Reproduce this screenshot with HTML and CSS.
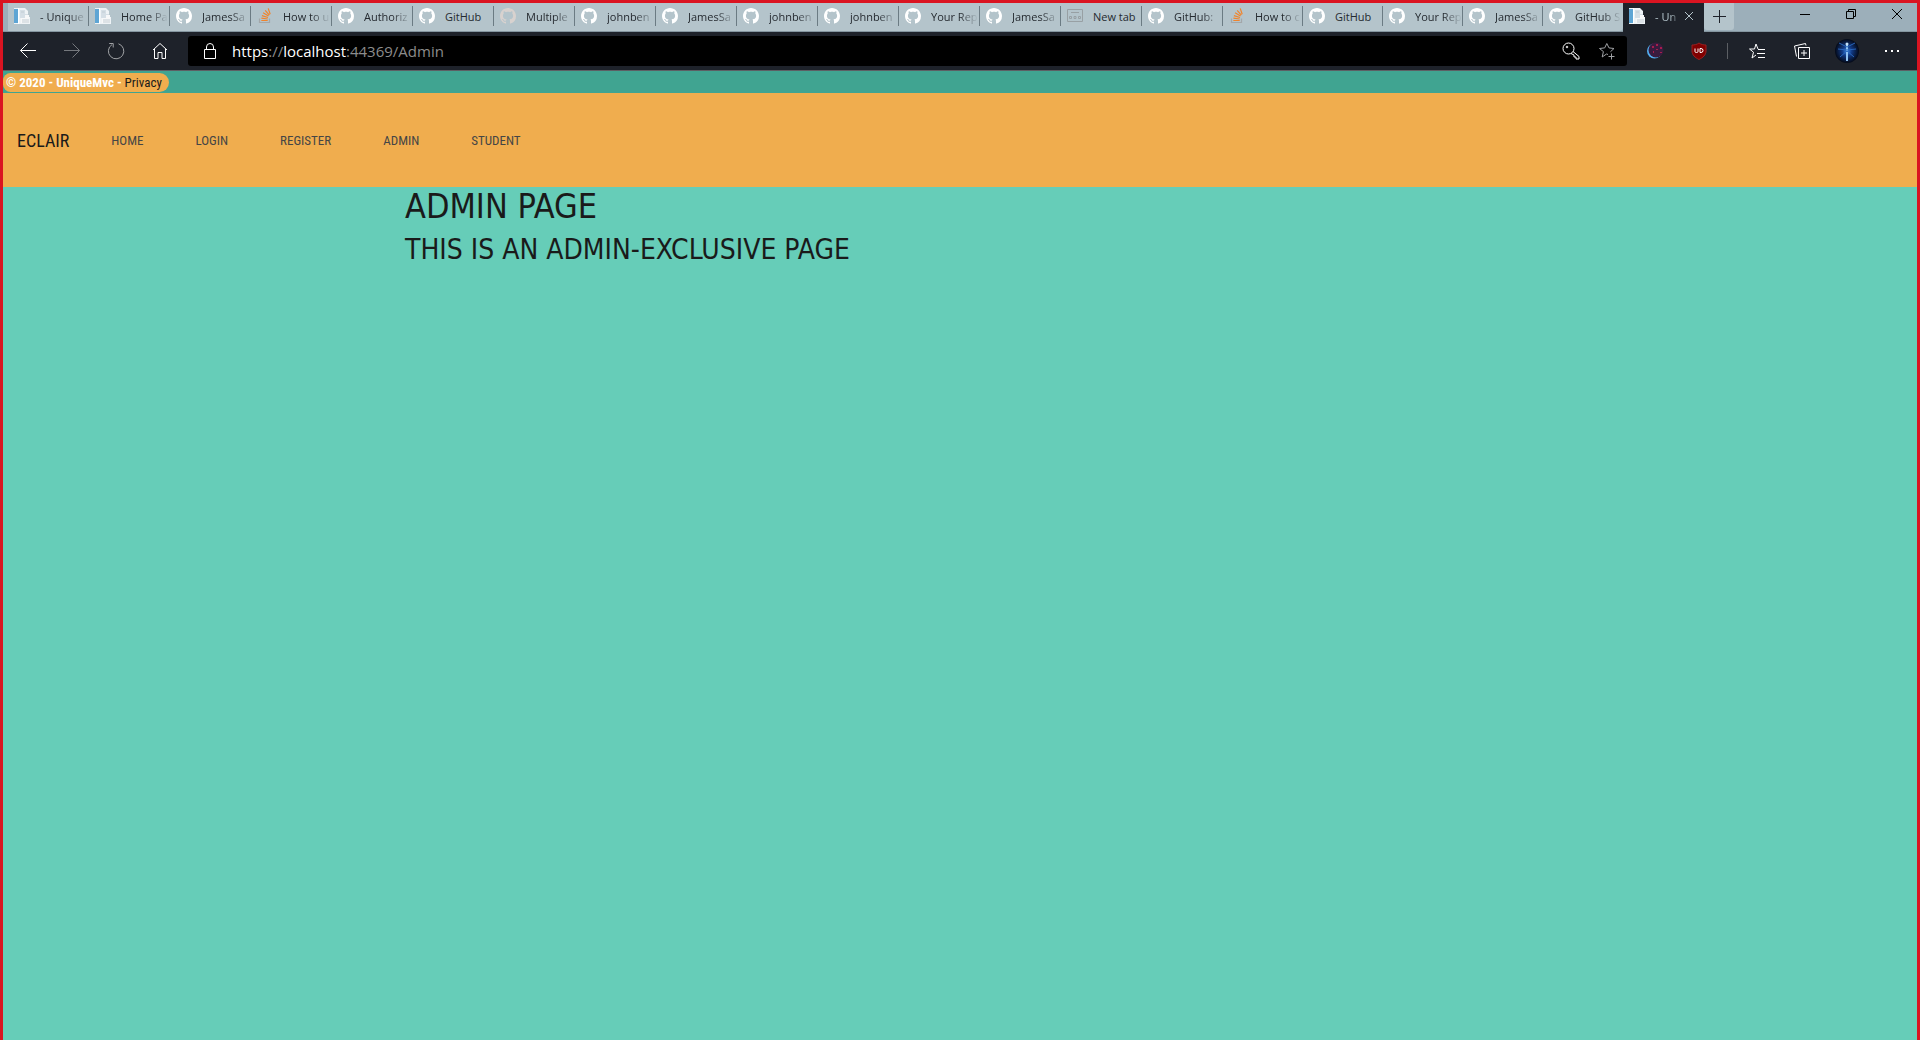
FILE: index.html
```html
<!DOCTYPE html>
<html lang="en">
<head>
<meta charset="utf-8">
<title>- UniqueMvc</title>
<link rel="stylesheet" href="styles.css">
</head>
<body>
<svg class="defs" aria-hidden="true">
  <symbol id="github" viewBox="0 0 16 16"><path fill-rule="evenodd" d="M8 0C3.58 0 0 3.58 0 8c0 3.54 2.29 6.53 5.47 7.59.4.07.55-.17.55-.38 0-.19-.01-.82-.01-1.49-2.01.37-2.53-.49-2.69-.94-.09-.23-.48-.94-.82-1.13-.28-.15-.68-.52-.01-.53.63-.01 1.08.58 1.23.82.72 1.21 1.87.87 2.33.66.07-.52.28-.87.51-1.07-1.78-.2-3.64-.89-3.64-3.95 0-.87.31-1.59.82-2.15-.08-.2-.36-1.02.08-2.12 0 0 .67-.21 2.2.82.64-.18 1.32-.27 2-.27s1.36.09 2 .27c1.53-1.04 2.2-.82 2.2-.82.44 1.1.16 1.92.08 2.12.51.56.82 1.27.82 2.15 0 3.07-1.87 3.75-3.65 3.95.29.25.54.73.54 1.48 0 1.07-.01 1.93-.01 2.2 0 .21.15.46.55.38A8.01 8.01 0 0 0 16 8c0-4.42-3.58-8-8-8z"/></symbol>
  <symbol id="stack" viewBox="0 0 16 16"><path d="M2.500 10.500v4h10v-4" fill="none" stroke="#a3a7aa" stroke-width="1.200"/><g stroke="#f0842c" stroke-width="1.200"><path d="M4.300 12.500h6.400M4.400 10.200l6.300.8M4.900 7.600l6.100 1.900M6.100 4.800l5.400 3.300M8.200 2.300l4.100 4.800M11.200.4l2 5.800"/></g></symbol>
  <symbol id="page" viewBox="0 0 16 16"><path d="M0 0h11l3 3v6h2v7H0z" fill="#eef3f6"/><path d="M0 1h4v14H0z" fill="#5ea5d4"/><path d="M4 0h1v16H4z" fill="#fff"/><path d="M6 2h5v4h3v4H6z" fill="#d5dfe6"/><path d="M7 10h4v-3h4v8H7z" fill="#f7f8f9"/><path d="M8 12h7M8 14h7M7 4h3" stroke="#c1ccd3"/></symbol>
  <symbol id="newtab" viewBox="0 0 16 14"><path d="M.5.5h15v12H.5zM4 3.500h8" fill="none" stroke="#98a0a4"/><path d="M2.500 7.500h2v2h-2zM7 7.500h2v2H7zM11.500 7.500h2v2h-2z" fill="none" stroke="#98a0a4"/></symbol>
</svg>
<div class="window">
<header class="browser">
  <div class="tabstrip">
    <nav class="tabs" aria-label="Open tabs">
      <button class="tab"><svg class="favicon"><use href="#page"/></svg><span>- Unique</span></button>
      <button class="tab"><svg class="favicon"><use href="#page"/></svg><span>Home Pa</span></button>
      <button class="tab"><svg class="favicon"><use href="#github"/></svg><span>JamesSa</span></button>
      <button class="tab"><svg class="favicon"><use href="#stack"/></svg><span>How to u</span></button>
      <button class="tab"><svg class="favicon"><use href="#github"/></svg><span>Authoriz</span></button>
      <button class="tab"><svg class="favicon"><use href="#github"/></svg><span class="whole">GitHub</span></button>
      <button class="tab"><svg class="favicon faded"><use href="#github"/></svg><span>Multiple</span></button>
      <button class="tab"><svg class="favicon"><use href="#github"/></svg><span>johnben</span></button>
      <button class="tab"><svg class="favicon"><use href="#github"/></svg><span>JamesSa</span></button>
      <button class="tab"><svg class="favicon"><use href="#github"/></svg><span>johnben</span></button>
      <button class="tab"><svg class="favicon"><use href="#github"/></svg><span>johnben</span></button>
      <button class="tab"><svg class="favicon"><use href="#github"/></svg><span>Your Rep</span></button>
      <button class="tab"><svg class="favicon"><use href="#github"/></svg><span>JamesSa</span></button>
      <button class="tab"><svg class="favicon"><use href="#newtab"/></svg><span class="whole">New tab</span></button>
      <button class="tab"><svg class="favicon"><use href="#github"/></svg><span>GitHub:</span></button>
      <button class="tab narrow"><svg class="favicon"><use href="#stack"/></svg><span>How to c</span></button>
      <button class="tab narrow"><svg class="favicon"><use href="#github"/></svg><span class="whole">GitHub</span></button>
      <button class="tab narrow"><svg class="favicon"><use href="#github"/></svg><span>Your Rep</span></button>
      <button class="tab narrow"><svg class="favicon"><use href="#github"/></svg><span>JamesSa</span></button>
      <button class="tab narrow last"><svg class="favicon"><use href="#github"/></svg><span>GitHub S</span></button>
      <div class="tab active"><svg class="favicon"><use href="#page"/></svg><span>- Un</span><button class="close" aria-label="Close tab"><svg viewBox="0 0 10 10"><path d="M1 1l8 8M9 1L1 9"/></svg></button></div>
    </nav>
    <button class="new-tab" aria-label="New tab"><svg viewBox="0 0 13 13"><path d="M6.500 0v13M0 6.500h13"/></svg></button>
    <div class="controls">
      <button aria-label="Minimize"><svg viewBox="0 0 10 10"><path d="M0 5.500h10"/></svg></button>
      <button aria-label="Restore"><svg viewBox="0 0 10 10"><path d="M.5 2.500h7v7h-7zM2.500 2.500v-2h7v7h-2"/></svg></button>
      <button aria-label="Close"><svg viewBox="0 0 10 10"><path d="M0 0l10 10M10 0L0 10"/></svg></button>
    </div>
  </div>
  <div class="toolbar">
    <button class="tool" aria-label="Back"><svg viewBox="0 0 18 18"><path d="M17 8.500H1.500M8.500 1.500l-7 7 7 7"/></svg></button>
    <button class="tool dim" aria-label="Forward"><svg viewBox="0 0 18 18"><path d="M1 8.500h15.500M9.500 1.500l7 7-7 7"/></svg></button>
    <button class="tool mid" aria-label="Refresh"><svg viewBox="0 0 18 18"><path d="M11.500 1.800A7.700 7.700 0 1 1 5 2.600M2.200 1.500h4v4"/></svg></button>
    <button class="tool" aria-label="Home"><svg viewBox="0 0 18 18"><path d="M2 8l7-6.500L16 8M3.500 7v9.500h3.500v-6h4v6h3.500V7"/></svg></button>
    <div class="address">
      <svg class="icon" viewBox="0 0 18 18"><path d="M3.500 7.500h11v9h-11zM5.500 7.500V5a3.500 3.500 0 0 1 7 0v2.500"/></svg>
      <a class="url" href="https://localhost:44369/Admin"><b>https</b>://<b>localhost</b>:44369/Admin</a>
      <button class="tool key" aria-label="Passwords"><svg viewBox="0 0 18 18"><circle cx="6.500" cy="6.500" r="5.500"/><path d="M11 9.500l6 5v2.500h-3v-2h-2v-2L9 11.500"/><circle cx="5" cy="5" r=".8"/></svg></button>
      <button class="tool star mid" aria-label="Add to favorites"><svg viewBox="0 0 18 18"><path d="M10 12.500L8.500 12 4.200 15l1.200-5.400L1.500 6.500l5.200-.6L8.800 1.500l2.200 4.400 5 .6-3.600 3.300M10.500 14.500h6M13.500 11.500v6"/></svg></button>
    </div>
    <button class="tool" aria-label="Theme extension"><svg viewBox="0 0 18 18"><circle class="orb-rim" cx="8.500" cy="9" r="7.500"/><circle class="orb" cx="10" cy="8" r="7.500"/><g class="orb-spots"><path d="M6 4h2v2H6zM10 2h2v2h-2zM14 5h2v2h-2zM7 9h1v2H7zM10 7h2v1h-2zM14 10h2v1h-2z"/></g></svg></button>
    <button class="tool" aria-label="Ad blocker"><svg viewBox="0 0 18 18"><path class="shield" d="M9 1c2 1.500 4.500 2 7 2v6c0 4-3 6.500-7 8.500C5 15.500 2 13 2 9V3c2.500 0 5-.5 7-2z"/><path class="shield-mark" d="M5 6.500v3q0 1 1.500 1T8 9.500v-3M10 6.500h1q2 0 2 2t-2 2h-1z"/></svg></button>
    <span class="divider"></span>
    <button class="tool wide" aria-label="Favorites"><svg viewBox="0 0 18 18"><path d="M10 7L8 2 6.500 7H1.500l4 3.200L4 16l4-3M10 7.500h7M9 11.500h8M10 15.500h7"/></svg></button>
    <button class="tool wide" aria-label="Collections"><svg viewBox="0 0 18 18"><path d="M5.500 5.500h11v11h-11zM11 8v6M8 11h6M3.500 14.500L1.500 4l11-2.500.5 2"/></svg></button>
    <button class="tool wide" aria-label="Profile"><svg class="avatar" viewBox="0 0 24 24"><defs><radialGradient id="glow"><stop offset="0" stop-color="#3c86e0"/><stop offset=".4" stop-color="#113a86"/><stop offset="1" stop-color="#040916"/></radialGradient></defs><circle class="fill" cx="12" cy="12" r="12" fill="url(#glow)"/><path class="body" d="M12 5v17"/><path class="rays" d="M12 8L4 4M12 8l8-4M12 11l-9-1M12 11l9-1M12 12l-7 6M12 12l7 6"/><circle class="head" cx="12" cy="5" r="1.500"/></svg></button>
    <button class="tool wide" aria-label="Settings and more"><svg viewBox="0 0 18 18"><path class="dots" d="M2 8h2v2H2zM8 8h2v2H8zM14 8h2v2h-2z"/></svg></button>
  </div>
</header>
<div class="site">
  <footer class="footer"><div class="pill">© 2020 - UniqueMvc - <a href="#privacy">Privacy</a></div></footer>
  <nav class="navbar" aria-label="Site">
    <a class="brand" href="#home">ECLAIR</a>
    <ul>
      <li><a href="#home">HOME</a></li>
      <li><a href="#login">LOGIN</a></li>
      <li><a href="#register">REGISTER</a></li>
      <li><a href="#admin">ADMIN</a></li>
      <li><a href="#student">STUDENT</a></li>
    </ul>
  </nav>
  <main class="container">
    <h1>ADMIN PAGE</h1>
    <h2>THIS IS AN ADMIN-EXCLUSIVE PAGE</h2>
  </main>
</div>
</div>
</body>
</html>
```
FILE: styles.css
```css
* { box-sizing: border-box; }
body { margin: 0; font-family: "Open Sans", sans-serif; }
button { border: 0; padding: 0; margin: 0; background: none; font: inherit; color: inherit; }
a { color: inherit; text-decoration: none; }
svg { display: block; }
.defs { position: absolute; width: 0; height: 0; }

.window {
  display: flex;
  flex-direction: column;
  min-height: 100vh;
  border: 3px solid #da1421;
  border-bottom: 0;
  overflow: hidden;
}

/* Tabs */
.tabstrip {
  display: flex;
  height: 29px;
  padding-left: 5px;
  background: #9cafba;
  border-bottom: 1px solid #8596a0;
}
.tabs { display: flex; }
.tab {
  display: flex;
  align-items: center;
  width: 81px;
  height: 28px;
  padding: 0 2px 2px 6px;
  background: linear-gradient(#6b7b83, #6b7b83) right 3px / 1px 20px no-repeat #b4c4cb;
  color: #252a30;
  font-size: 11px;
  text-align: left;
}
.tab.narrow { width: 80px; }
.tab.last { background: #b4c4cb; border-bottom-right-radius: 4px; }
.tab span {
  flex: 1;
  margin-left: 10px;
  white-space: nowrap;
  -webkit-mask-image: linear-gradient(to right, #000 60%, transparent);
  mask-image: linear-gradient(to right, #000 60%, transparent);
}
.tab .whole { -webkit-mask-image: none; mask-image: none; }
.favicon { flex: none; width: 16px; height: 16px; fill: #fff; }
.faded { fill: #d8d2cf; }
.tab.active { height: 29px; padding-bottom: 3px; background: #1e222a; color: #b4c4cb; }
.close { width: 22px; padding-left: 4px; }
.close svg { width: 10px; stroke: #b4c4cb; stroke-width: 1; }
.new-tab {
  display: grid;
  place-items: center;
  width: 30px;
  height: 27px;
  background: #b4c4cb;
  border-radius: 0 0 3px 3px;
}
.new-tab svg { width: 13px; stroke: #1e222a; }
.controls { display: flex; margin: 0 -3px 0 auto; }
.controls button { display: grid; place-items: center; width: 46px; height: 22px; }
.controls svg { width: 10px; fill: none; stroke: #000; overflow: visible; }

/* Toolbar */
.toolbar {
  display: flex;
  align-items: center;
  height: 39px;
  padding: 0 3px;
  background: #1e222a;
  border-bottom: 1px solid #5c5f64;
}
.tool { display: grid; place-items: center; flex: none; width: 44px; height: 30px; }
.tool.wide { width: 45px; }
.tool svg, .icon { width: 18px; height: 18px; fill: none; stroke: #fff; stroke-width: 1; }
.tool.dim svg { stroke: #75787d; }
.tool.mid svg { stroke: #a0a2a5; }
.address {
  display: flex;
  align-items: center;
  flex: 1;
  height: 30px;
  margin: 0 6px;
  padding-left: 13px;
  background: #000;
  border-radius: 3px;
}
.url { flex: 1; margin-left: 13px; color: #8c8c8c; font-size: 15px; line-height: 20px; }
.url b { color: #fff; font-weight: 400; }
.tool.key { width: 32px; }
.tool.star { width: 40px; }
.tool .orb-rim { fill: #52aef0; stroke: none; }
.tool .orb { fill: #391c3e; stroke: none; }
.tool .orb-spots { fill: #a51d4d; stroke: none; }
.tool .shield { fill: #800000; stroke: #9b2020; }
.divider { width: 1px; height: 16px; margin: 0 6px; background: #5c5f64; }
.tool .avatar { width: 24px; height: 24px; stroke: #2866bd; }
.avatar .fill { stroke: none; }
.avatar .body { stroke: #8fc2f3; stroke-width: 2; }
.avatar .head { fill: #c5e2f8; stroke: none; }
.tool .dots { fill: #fff; stroke: none; }

/* Site */
.site { flex: 1; background: #66cdb8; font-family: "Roboto Condensed", "Open Sans", sans-serif; color: #1a1a1a; }
.footer { display: flex; height: 22px; padding: 2px 0 1px; background: #40a491; }
.pill {
  padding: 0 7px 0 3px;
  background: #f0ad4e;
  border-radius: 8px 10px 10px 8px;
  color: #fff;
  font-size: 13px;
  font-weight: 700;
  line-height: 19px;
}
.pill a { color: #1a1a1a; font-weight: 400; }
.navbar {
  display: flex;
  align-items: center;
  gap: 42px;
  height: 94px;
  padding: 0 14px;
  background: #f0ad4e;
}
.brand { font-size: 18px; }
.navbar ul { display: flex; gap: 52px; margin: 0; padding: 0; list-style: none; color: #454545; font-size: 13px; }
.container { width: 1110px; max-width: 100%; margin: 0 auto; font-family: "DejaVu Sans Condensed", "Roboto", sans-serif; }
h1, h2 { margin: 0; font-weight: 400; }
h1 { font-size: 34px; line-height: 38px; }
h2 { font-size: 28px; line-height: 50px; }
```
